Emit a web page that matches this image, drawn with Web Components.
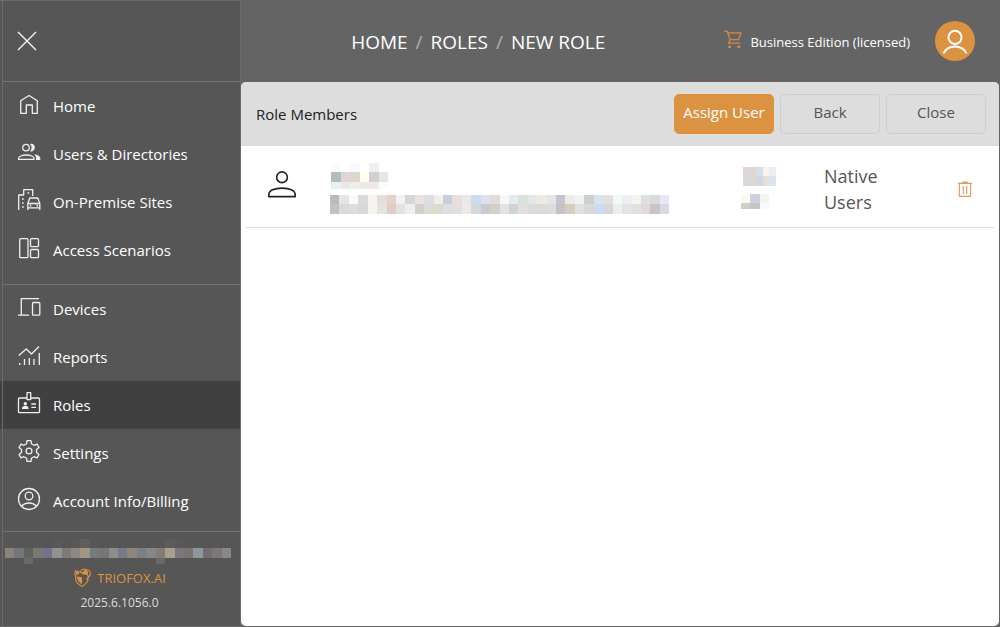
<!DOCTYPE html>
<html lang="en">
<head>
<meta charset="utf-8">
<title>Triofox - New Role</title>
<style>
html, body { height: 100%; margin: 0; }
body { font-family: "Open Sans", "Noto Sans", sans-serif; background: #646464; --accent: #dc9341; }
</style>
</head>
<body>
<role-app></role-app>
<script>
const define = (name, html, setup) => {
  const template = document.createElement('template');
  template.innerHTML = '<style>*{box-sizing:border-box}</style>' + html;
  customElements.define(name, class extends HTMLElement {
    constructor() {
      super();
      this.attachShadow({ mode: 'open' }).append(template.content.cloneNode(true));
    }
    connectedCallback() { if (setup) setup(this, this.shadowRoot); }
  });
};

const icons = {
  close: '<path d="M3 3l18 18M21 3L3 21"/>',
  home: '<path d="M3.7 21.3V8.7L12 3.5l8.3 5.2v12.6h-5V13H9.3v8.300z"/>',
  users: '<circle cx="9" cy="7.600" r="3.300"/><path d="M1.600 19.400v-1.200c0-1.600 3.600-3.200 7.700-3.200s7.700 1.600 7.700 3.200v1.200z"/><path fill="currentColor" stroke="none" d="M13 4c3-.8 4.800 1.100 4.800 3.600S16 12 13 11.200c2.200-2 2.200-5.200 0-7.200zM17 14.200c3.500.4 6.300 1.800 6.300 4.200V20H19v-1.800c0-1.600-.7-2.900-2-4z"/>',
  sites: '<path d="M1.700 22V7h5V1.700h9V8M10.800 22v-6.500l2-5.500h8l2 5.500V22M10.800 15.500h12M11 19.800h12"/><path stroke-width="1.700" d="M10.500 5h1.700M5 11h1.700M5 15h1.700M5 19h1.700M12.800 17.700h1.500M19.500 17.700H21"/>',
  scenarios: '<rect x="2.700" y="2.700" width="8.300" height="19" rx="1"/><rect x="13.500" y="2.700" width="8" height="8" rx="1"/><rect x="13.500" y="13.500" width="8" height="8.200" rx="1"/>',
  devices: '<path d="M22 3.700H4.300v16M1 20.200h11"/><rect x="15.500" y="7.500" width="7.300" height="12.700" rx="1"/>',
  reports: '<path d="M1.800 12.500L9.300 6l5.200 5L22 3.500M2.700 20v2M7.500 16v6M12.300 15v7M17 16v6M22.300 10v12"/>',
  roles: '<path d="M10 7H2.700Q1.500 7 1.500 8.200v12.300q0 1.200 1.200 1.200h18.600q1.200 0 1.200-1.200V8.200Q22.500 7 21.300 7H13.700"/><rect x="10" y="1.600" width="3.700" height="7"/><path d="M14.300 13h4.700M14.300 16.300h4.700"/><g fill="currentColor" stroke="none"><circle cx="8.300" cy="12.800" r="1.700"/><path d="M5 18c0-2.600 1.200-3 3.300-3s3.300.4 3.300 3z"/></g>',
  settings: '<path d="M10 1.600H14L14.400 4.700L17.100 6.300L20 5.100L22 8.500L19.500 10.400V13.600L22 15.500L20 18.900L17.100 17.700L14.400 19.300L14 22.400H10L9.600 19.300L6.900 17.700L4 18.900L2 15.500L4.500 13.600V10.400L2 8.500L4 5.100L6.900 6.300L9.600 4.700Z"/><circle cx="12" cy="12" r="2.900"/>',
  account: '<circle cx="12" cy="12" r="10.500"/><circle cx="12" cy="9" r="3.800"/><path d="M4.700 19.300c3-4.400 11.600-4.400 14.600 0"/>',
  cart: '<path d="M1.500 2.500h3.300l3.800 10.300h9.900l3.300-8.300H5.600M8.600 12.800L6.500 17h14.200"/><g fill="currentColor" stroke="none"><circle cx="8" cy="21.300" r="1.800"/><circle cx="19" cy="21.300" r="1.800"/></g>',
  avatar: '<circle cx="12" cy="9.300" r="4.900"/><path d="M3.400 21.300c3.600-6.900 13.600-6.900 17.200 0"/>',
  person: '<circle cx="12" cy="5.400" r="4.600"/><path d="M.7 22v-1.600c0-3.700 5-5.700 11.300-5.700s11.300 2 11.300 5.700V22z"/>',
  trash: '<path d="M2.500 4.500h19M8.500 2.800h7M4.500 4.500v17.300h15V4.500M9.700 8v10.500M14.300 8v10.500"/>',
  fox: '<path d="M8.500 4.500L3 3.300Q1.200 7 3.200 9.500v4.800Q4.500 19 10.500 22q6-3 7.500-7.500V9.300M8.500 4.500q1.300-3 5-3.300l2.500.9q4 .2 5 4.200-.2 3.700-4.700 7.400M8.500 4.500L12 7l5-2 1 5"/><path fill="currentColor" d="M5.500 10.800l4.700 1v6.400Q6 16 5.500 10.800zM11.500 6l3.700-3.700L17.500 5l-2 2.700zM4 5l3 1-2.500 2z"/>'
};

define('ui-icon', `
<style>
:host { display: block; flex: none; width: 24px; height: 24px; }
svg { display: block; width: 100%; height: 100%; fill: none; stroke: currentColor; stroke-linejoin: round; }
</style><svg viewBox="0 0 24 24" aria-hidden="true"></svg>`, (host, root) => {
  const svg = root.querySelector('svg');
  svg.setAttribute('stroke-width', host.getAttribute('weight') || '1.3');
  svg.innerHTML = icons[host.getAttribute('name')] || '';
});

/* Pixelated block that hides private text. Rows: "height: colour colour ..." split by ";", "-" is an empty cell. */
define('redacted-text', `
<style>:host { display: block; } svg { display: block; width: 100%; height: 100%; }</style>
<svg preserveAspectRatio="none" shape-rendering="crispEdges" role="img" aria-label="Hidden"></svg>`, (host, root) => {
  const rows = host.getAttribute('rows').split(';').map(r => {
    const [h, cells] = r.split(':');
    return { h: +h, cells: cells.trim().split(/\s+/) };
  });
  let y = 0, out = '';
  for (const row of rows) {
    row.cells.forEach((c, x) => {
      if (c !== '-') out += `<rect x="${x}" y="${y}" width="1" height="${row.h}" fill="#${c}"/>`;
    });
    y += row.h;
  }
  const svg = root.querySelector('svg');
  svg.setAttribute('viewBox', `0 0 ${Math.max(...rows.map(r => r.cells.length))} ${y}`);
  svg.innerHTML = out;
});

define('nav-item', `
<style>
:host { display: block; }
a { display: flex; align-items: center; gap: 12px; height: 48px; padding-left: 14px; color: #fff; text-decoration: none; font-size: 15px; }
:host([current]) a { background: #404040; box-shadow: -1px 0 #6b6b6b, -3px 0 #404040; }
ui-icon { margin-bottom: 4px; color: #f0f0f0; }
</style>
<a href="#"><ui-icon></ui-icon><slot></slot></a>`, (host, root) => {
  const icon = document.createElement('ui-icon');
  icon.setAttribute('name', host.getAttribute('icon'));
  root.querySelector('ui-icon').replaceWith(icon);
  if (host.hasAttribute('current')) root.querySelector('a').setAttribute('aria-current', 'page');
});

define('side-bar', `
<style>
:host { display: flex; flex-direction: column; flex: none; width: 241px; background: #565656; border: 1px solid #6b6b6b; border-width: 1px 1px 1px 0; }
.top { display: flex; align-items: center; height: 81px; padding-left: 12px; border-bottom: 1px solid #747474; }
.top, nav, footer { margin-left: 2px; border-left: 1px solid #6b6b6b; }
button { padding: 0; border: 0; background: none; color: #f4f4f4; }
.first { padding-bottom: 10px; border-bottom: 1px solid #747474; }
.second { padding-bottom: 6px; border-bottom: 1px solid #747474; }
footer { flex: 1; display: flex; flex-direction: column; align-items: center; padding: 7px 4px 0 0; font-size: 12px; line-height: 20px; color: #ddd; }
redacted-text { align-self: stretch; margin: 0 5px 0 2px; height: 25px; }
a { display: flex; align-items: center; gap: 4px; margin-top: 4px; font-size: 13px; color: var(--accent); text-decoration: none; }
a ui-icon { width: 20px; height: 20px; }
.version { margin-top: 5px; }
</style>
<div class="top"><button aria-label="Close menu"><ui-icon name="close" weight="1.4"></ui-icon></button></div>
<nav class="first">
  <nav-item icon="home">Home</nav-item>
  <nav-item icon="users">Users &amp; Directories</nav-item>
  <nav-item icon="sites">On-Premise Sites</nav-item>
  <nav-item icon="scenarios">Access Scenarios</nav-item>
</nav>
<nav class="second">
  <nav-item icon="devices">Devices</nav-item>
  <nav-item icon="reports">Reports</nav-item>
  <nav-item icon="roles" current>Roles</nav-item>
  <nav-item icon="settings">Settings</nav-item>
  <nav-item icon="account">Account Info/Billing</nav-item>
</nav>
<footer>
  <redacted-text rows="9: 595653 - 585655 - 565658 585858 585655 595857 605d5a - - - - - - - - 5d5b58 585759 - - - - -;10: 88847d 74767c 5f6463 787974 767188 929291 807977 8d8984 a09685 727d7a 797476 8c8e89 767b89 8e867d 7a8081 878789 857c73 a8a08b 7c7580 79746f 8d979f 756b72 7d7679 858a88;6: - - 656a69 - - - - - - - - - - - - - 68696a - - - - - - -"></redacted-text>
  <a href="#"><ui-icon name="fox"></ui-icon>TRIOFOX.AI</a>
  <div class="version">2025.6.1056.0</div>
</footer>`);

define('top-bar', `
<style>
:host { display: flex; align-items: center; height: 82px; padding-right: 25px; color: #fff; }
ol { flex: 1; display: flex; justify-content: center; margin: 0 8px 0 0; padding: 2px 0 0; list-style: none; font-size: 19px; line-height: 28px; white-space: nowrap; }
li + li::before { content: "/"; margin: 0 8px; color: #b0b0b0; }
a { color: inherit; text-decoration: none; }
.edition { display: flex; align-items: center; gap: 7px; margin-right: 25px; padding-top: 2px; font-size: 13px; white-space: nowrap; }
.edition ui-icon { width: 20px; height: 20px; margin-bottom: 6px; color: #d88843; }
button { padding: 4px; width: 40px; height: 40px; border: 0; border-radius: 50%; background: var(--accent); color: #fff; }
button ui-icon { width: 32px; height: 32px; }
</style>
<ol><li><a href="#">HOME</a></li><li><a href="#">ROLES</a></li><li>NEW ROLE</li></ol>
<div class="edition"><ui-icon name="cart" weight="1.5"></ui-icon><span>Business Edition (licensed)</span></div>
<button aria-label="Account"><ui-icon name="avatar" weight="1.5"></ui-icon></button>`);

define('ui-button', `
<style>
:host { display: block; width: 100px; }
button { width: 100%; height: 40px; padding: 0 0 4px; border: 1px solid #cdcdcd; border-radius: 5px; background: none; font: inherit; font-size: 15px; color: #555; white-space: nowrap; }
:host([primary]) button { background: var(--accent); border-color: var(--accent); color: #fff; }
</style><button><slot></slot></button>`);

define('member-table', `
<style>
:host { display: block; padding: 0 5px; }
table { width: 100%; table-layout: fixed; border-collapse: collapse; }
td { height: 81px; padding: 4px 0 0; border-bottom: 1px solid #ddd; vertical-align: middle; }
.icon { width: 84px; padding: 0 0 2px 20px; color: #222; }
.icon ui-icon { width: 32px; height: 28px; }
.name { width: 57px; height: 26px; margin-left: 1px; }
.mail { width: 339px; height: 19px; margin-top: 6px; }
.id { width: 82px; }
.id1 { width: 33px; height: 19px; margin-left: 2px; }
.id2 { width: 28px; height: 15px; margin-top: 8px; }
.type { width: 120px; padding: 6px 40px 0 1px; font-size: 18px; line-height: 26px; color: #555; }
.del { width: 51px; padding-top: 5px; }
button { display: block; margin-left: 13px; padding: 0; border: 0; background: none; color: #dc9a5c; }
button ui-icon { width: 18px; height: 20px; }
</style>
<table aria-label="Role members"><tbody><tr>
<td class="icon"><ui-icon name="person" weight="1.400"></ui-icon></td>
<td>
  <redacted-text class="name" rows="9: fafcfc - f6fafc fffffc efefef -;10: b3bcbe e0d5d1 dcd6ce fffff0 d7cecd e2e8e4;7: eaf0f2 e9e7e7 eeeee9 e9e8ea f0e9e9 f8fdfa"></redacted-text>
  <redacted-text class="mail" rows="9: bdbabf e5e4e4 f9f9f8 d9dad9 f7f3ef e7ddda e4d2c6 eff3f7 d4d7d7 ebe3e0 dcdee2 f2eeeb c9cedb eadfda e8e8e5 cddcec dce1ed e3dad9 f3faf9 e4ebf3 d9e0de e2e8e6 eeebe3 e4e5e9 c8c4cd eeeae7 eff3f7 cbcfcd d9e2ef e4dfde f2f8f7 edeef3 f3f3f2 e0dfe1 dbdbdd e6e9f4;10: c0c0c7 dfd7d4 d9dedf d8d7d3 f6f2ee e6e2df e0cdc3 e2e3e1 eeeeef d3d0cd dedbd7 d9dbcf d9dfe2 e2e0de eee9e4 d2d8db c9cacf d3d0ca e3e3e0 ced4d6 e3dedc dddadb d8dbd9 dadcdd c2c2c7 d7cdbd e1e2df d9d9d5 c9dcf2 d7d7da eaf0eb dfe4e5 e1e1dd e2d8d6 c9c4ca d8d9e3"></redacted-text>
</td>
<td class="id">
  <redacted-text class="id1" rows="9: ddd8d5 ddd8d5 d4dfe7 f8f4ef e9edf5;10: dcd8d5 dcd8d5 d0d7e0 e4dfdb dbe4f0"></redacted-text>
  <redacted-text class="id2" rows="9: fdf9f2 ccd3da f2f5ef;6: d1cfc9 c5c5c4 f1fbfe"></redacted-text>
</td>
<td class="type">Native Users</td>
<td class="del"><button aria-label="Remove member"><ui-icon name="trash" weight="1.500"></ui-icon></button></td>
</tr></tbody></table>`);

define('members-panel', `
<style>
:host { display: block; flex: 1; margin: 0 1px 1px 0; background: #fff; border-radius: 5px; overflow: hidden; }
header { display: flex; align-items: center; gap: 6px; height: 64px; padding: 0 13px 0 15px; background: #ddd; }
h1 { flex: 1; margin: 0; font-size: 15px; font-weight: 400; color: #222; }
</style>
<header>
  <h1>Role Members</h1>
  <ui-button primary>Assign User</ui-button><ui-button>Back</ui-button><ui-button>Close</ui-button>
</header>
<member-table></member-table>`);

define('role-app', `
<style>
:host { display: flex; min-height: 100%; }
main { flex: 1; min-width: 0; display: flex; flex-direction: column; }
</style>
<side-bar></side-bar>
<main><top-bar></top-bar><members-panel></members-panel></main>`);
</script>
</body>
</html>
